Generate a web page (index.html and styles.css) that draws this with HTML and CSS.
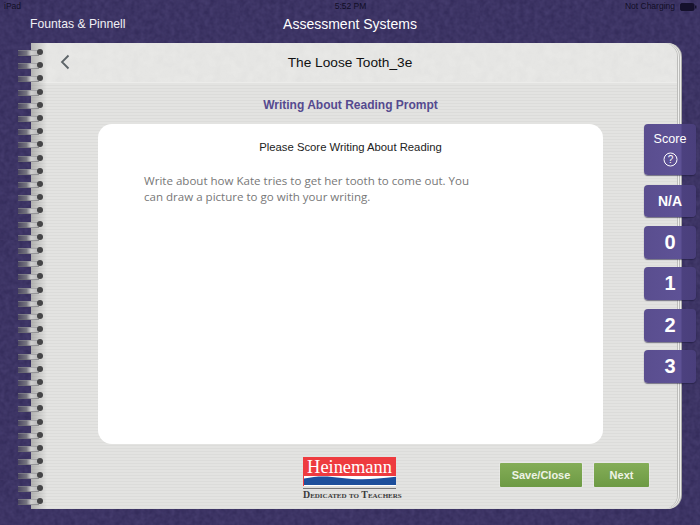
FILE: index.html
```html
<!DOCTYPE html>
<html lang="en">
<head>
<meta charset="utf-8">
<title>Assessment Systems</title>
<link rel="stylesheet" href="styles.css">
</head>
<body>
<div class="app">
  <div class="status">
    <span class="status-left">iPad</span>
    <span class="status-time">5:52 PM</span>
    <span class="status-right">Not Charging
      <svg class="battery" width="17" height="8" viewBox="0 0 17 8"><rect x="0.5" y="0.5" width="13.5" height="7" rx="1.5" fill="#15112c" stroke="#15112c"/><rect x="15" y="2.5" width="1.5" height="3" fill="#15112c"/></svg>
    </span>
  </div>
  <header class="topbar">
    <span class="brand">Fountas &amp; Pinnell</span>
    <span class="app-title">Assessment Systems</span>
  </header>
  <main class="notebook">
    <div class="rings" aria-hidden="true">
      <i></i><i></i><i></i><i></i><i></i><i></i><i></i><i></i><i></i><i></i><i></i><i></i><i></i><i></i><i></i><i></i><i></i><i></i><i></i><i></i><i></i><i></i><i></i><i></i><i></i><i></i><i></i><i></i><i></i><i></i><i></i><i></i><i></i><i></i><i></i>
    </div>
    <div class="page-head">
      <svg class="back" width="12" height="18" viewBox="0 0 12 18"><path d="M9.5 2.5 L3 9 L9.5 15.5" fill="none" stroke="#5d6468" stroke-width="1.8"/></svg>
      <h1 class="book-title">The Loose Tooth_3e</h1>
    </div>
    <div class="ruled">
      <h2 class="prompt-title">Writing About Reading Prompt</h2>
      <section class="card">
        <p class="card-title">Please Score Writing About Reading</p>
        <p class="card-text">Write about how Kate tries to get her tooth to come out. You<br>can draw a picture to go with your writing.</p>
      </section>
      <footer class="foot">
        <div class="logo">
          <div class="logo-box">
            <span class="logo-name">Heinemann</span>
            <svg class="logo-wave" width="92" height="10" viewBox="0 0 92 10" preserveAspectRatio="none"><rect width="92" height="10" fill="#ffffff"/><path d="M0 2.5 C14 -0.5 24 0 38 2 C54 4 70 3.5 92 0.8 V9 H0 Z" fill="#1d4f9c"/></svg>
          </div>
          <div class="logo-tag">Dedicated to Teachers</div>
        </div>
        <div class="actions">
          <button class="btn btn-save">Save/Close</button>
          <button class="btn btn-next">Next</button>
        </div>
      </footer>
    </div>
  </main>
  <aside class="scores">
    <div class="score score-head">Score
      <svg class="help" width="15" height="15" viewBox="0 0 15 15"><circle cx="7.5" cy="7.5" r="6.5" fill="none" stroke="#fff" stroke-width="1"/><text x="7.5" y="11" text-anchor="middle" class="help-q">?</text></svg>
    </div>
    <div class="score score-na">N/A</div>
    <div class="score score-num">0</div>
    <div class="score score-num">1</div>
    <div class="score score-num">2</div>
    <div class="score score-num">3</div>
  </aside>
</div>
</body>
</html>
```
FILE: styles.css
```css
* { box-sizing: border-box; }
html, body { margin: 0; padding: 0; }
body {
  width: 700px;
  height: 525px;
  overflow: hidden;
  font-family: "Liberation Sans", Arial, sans-serif;
  background-color: #342b5c;
}
.app {
  position: relative;
  width: 700px;
  height: 525px;
  background-color: #352d5c;
  background-image: url("data:image/svg+xml,%3Csvg xmlns='http://www.w3.org/2000/svg' width='240' height='240'%3E%3Cfilter id='n'%3E%3CfeTurbulence type='fractalNoise' baseFrequency='0.2' numOctaves='2' seed='4'/%3E%3CfeColorMatrix values='0 0 0 0 0.14 0 0 0 0 0.11 0 0 0 0 0.3 0 0 0 0.45 -0.08'/%3E%3C/filter%3E%3Crect width='240' height='240' filter='url(%23n)'/%3E%3C/svg%3E");
}
.status {
  height: 12px;
  padding: 1px 3px 0 4px;
  display: grid;
  grid-template-columns: 1fr auto 1fr;
  font-size: 8.5px;
  line-height: 11px;
  color: #110e26;
}
.status-right {
  justify-self: end;
  display: flex;
  align-items: center;
  gap: 5px;
}
.topbar {
  position: relative;
  height: 31px;
  color: #fff;
  text-align: center;
}
.brand {
  position: absolute;
  left: 30px;
  top: 5px;
  font-size: 12.2px;
  line-height: 15px;
  color: #f0eff4;
}
.app-title {
  display: block;
  padding-top: 4px;
  font-size: 14px;
  line-height: 17px;
}
.notebook {
  position: relative;
  width: 646px;
  height: 466px;
  margin-left: 31px;
  background-color: #e3e3e1;
  border-radius: 0 14px 14px 0;
  box-shadow: 1px 0 0 #bdbdbb, 2px 0 0 #f0f0ee, 3px 0 0 #bcbcba, 4px 0 0 #ededeb, 5px 0 0 #a9a9a8;
  display: flex;
  flex-direction: column;
}
.notebook::before {
  content: "";
  position: absolute;
  left: 0;
  top: 0;
  bottom: 0;
  width: 16px;
  background: linear-gradient(to right, rgba(0,0,0,0.22), rgba(0,0,0,0));
  z-index: 1;
}
.rings {
  position: absolute;
  left: -13px;
  top: 6px;
  bottom: 5px;
  width: 28px;
  display: flex;
  flex-direction: column;
  justify-content: space-between;
  z-index: 2;
}
.rings i {
  position: relative;
  display: block;
  width: 28px;
  height: 6px;
}
.rings i::before {
  content: "";
  position: absolute;
  left: 0;
  top: 1px;
  width: 21px;
  height: 4px;
  border-top: 1px solid rgba(140,140,145,0.55);
  border-bottom: 1px solid rgba(110,110,115,0.55);
  background: linear-gradient(to right, #4a4660, #75747f 40%, #cfcfcf 62%, #b8b8b8);
  filter: blur(0.6px);
}
.rings i::after {
  content: "";
  position: absolute;
  left: 19px;
  top: 0;
  width: 6px;
  height: 6px;
  border-radius: 50%;
  background: #454547;
  filter: blur(0.4px);
}
.page-head {
  position: relative;
  height: 40px;
  padding-right: 8px;
  display: flex;
  align-items: center;
  justify-content: center;
  background-color: #e8e8e6;
  background-image: url("data:image/svg+xml,%3Csvg xmlns='http://www.w3.org/2000/svg' width='240' height='240'%3E%3Cfilter id='p'%3E%3CfeTurbulence type='fractalNoise' baseFrequency='0.12' numOctaves='2' seed='9'/%3E%3CfeColorMatrix values='0 0 0 0 0.55 0 0 0 0 0.55 0 0 0 0 0.55 0 0 0 0.22 -0.05'/%3E%3C/filter%3E%3Crect width='240' height='240' filter='url(%23p)'/%3E%3C/svg%3E");
  border-radius: 0 14px 0 0;
  border-bottom: 1px solid #ececea;
}
.back {
  position: absolute;
  left: 28px;
  top: 10px;
}
.book-title {
  margin: 0 0 1px 0;
  font-size: 13.7px;
  font-weight: 400;
  line-height: 17px;
  color: #111;
}
.ruled {
  flex: 1;
  display: flex;
  flex-direction: column;
  padding: 14px 74px 0 67px;
  border-radius: 0 0 14px 0;
  background-color: #e0e0de;
  background-image: repeating-linear-gradient(to bottom, #e3e3e1 0, #e3e3e1 2px, #dcdcda 2px, #dcdcda 3px);
}
.prompt-title {
  margin: 0 0 11px 0;
  font-size: 12px;
  font-weight: 700;
  line-height: 16px;
  color: #554a8f;
  text-align: center;
}
.card {
  height: 320px;
  padding: 16px 46px 0;
  background: #fff;
  border-radius: 14px;
}
.card-title {
  margin: 0 0 18px 0;
  font-size: 11.3px;
  line-height: 15px;
  text-align: center;
  color: #222;
}
.card-text {
  margin: 0;
  font-family: "Open Sans", sans-serif;
  font-size: 11.55px;
  line-height: 15.5px;
  color: #777;
}
.foot {
  position: relative;
  flex: 1;
  display: flex;
  justify-content: flex-end;
  padding-top: 19px;
  margin-right: -46px;
}
.logo {
  position: absolute;
  left: 205px;
  top: 13px;
  width: 93px;
}
.logo-box {
  height: 29px;
  background: #ee3b3f;
  position: relative;
  overflow: hidden;
  text-align: center;
}
.logo-name {
  display: block;
  font-family: "Liberation Serif", serif;
  font-size: 18.4px;
  line-height: 20px;
  color: #fff;
}
.logo-wave {
  position: absolute;
  left: 0.5px;
  bottom: 0;
  display: block;
}
.logo-tag {
  margin-top: 2px;
  padding-top: 1px;
  border-top: 1px solid #77777a;
  font-family: "Liberation Serif", serif;
  font-size: 9.9px;
  font-variant: small-caps;
  font-weight: 700;
  line-height: 10px;
  color: #3a3a3a;
  white-space: nowrap;
  text-align: center;
}
.actions {
  display: flex;
  gap: 12px;
  align-items: flex-start;
}
.btn {
  height: 24px;
  padding: 0;
  border: 0;
  border-radius: 1px;
  font-family: "Liberation Sans", Arial, sans-serif;
  font-size: 11px;
  font-weight: 700;
  color: #eef3e6;
  background: linear-gradient(to bottom, #84ad57, #6d9a44);
  box-shadow: 0 0 0 1px rgba(255,255,255,0.2);
}
.btn-save { width: 82px; }
.btn-next { width: 55px; }
.scores {
  position: absolute;
  left: 644px;
  top: 124px;
  width: 52px;
  display: flex;
  flex-direction: column;
  color: #fff;
}
.score {
  display: flex;
  flex-direction: column;
  align-items: center;
  justify-content: center;
  margin-bottom: 8.3px;
  border-radius: 4px;
  background: linear-gradient(to right, #5a4e8f 0, #5e5296 70%, #4c417f 74%, #4a3f7c 100%);
  box-shadow: 0 1px 1px rgba(30,25,60,0.55);
}
.score-head {
  height: 51px;
  margin-bottom: 10px;
  font-size: 12.6px;
  line-height: 15px;
  gap: 5px;
}
.help { display: block; }
.help-q { font-size: 10px; fill: #fff; font-family: "Liberation Sans", Arial, sans-serif; }
.score-na {
  height: 32px;
  font-size: 14px;
  font-weight: 700;
  margin-bottom: 9px;
}
.score-num {
  height: 33px;
  font-size: 20px;
  font-weight: 700;
}
```
